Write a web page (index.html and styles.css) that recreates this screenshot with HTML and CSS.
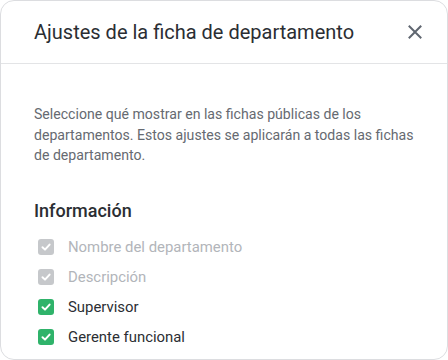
FILE: index.html
```html
<!DOCTYPE html>
<html lang="es">
<head>
<meta charset="utf-8">
<link rel="stylesheet" href="styles.css">
</head>
<body>
<div class="card">
  <div class="header">
    <h1 class="title">Ajustes de la ficha de departamento</h1>
    <button class="close" aria-label="Cerrar">
      <svg width="14" height="14" viewBox="0 0 14 14"><path d="M1.5 1.5 L12.5 12.5 M12.5 1.5 L1.5 12.5" stroke="#5f6670" stroke-width="2" stroke-linecap="square" fill="none"/></svg>
    </button>
  </div>
  <div class="body">
    <p class="desc">Seleccione qué mostrar en las fichas públicas de los departamentos. Estos ajustes se aplicarán a todas las fichas de departamento.</p>
    <h2 class="section">Información</h2>
    <ul class="list">
      <li class="item disabled"><span class="box"><svg width="12" height="12" viewBox="0 0 12 12"><path d="M2.5 6.2 L5 8.6 L9.6 3.6" stroke="#fff" stroke-width="2" fill="none" stroke-linecap="round" stroke-linejoin="round"/></svg></span>Nombre del departamento</li>
      <li class="item disabled"><span class="box"><svg width="12" height="12" viewBox="0 0 12 12"><path d="M2.5 6.2 L5 8.6 L9.6 3.6" stroke="#fff" stroke-width="2" fill="none" stroke-linecap="round" stroke-linejoin="round"/></svg></span>Descripción</li>
      <li class="item"><span class="box"><svg width="12" height="12" viewBox="0 0 12 12"><path d="M2.5 6.2 L5 8.6 L9.6 3.6" stroke="#fff" stroke-width="2" fill="none" stroke-linecap="round" stroke-linejoin="round"/></svg></span>Supervisor</li>
      <li class="item"><span class="box"><svg width="12" height="12" viewBox="0 0 12 12"><path d="M2.5 6.2 L5 8.6 L9.6 3.6" stroke="#fff" stroke-width="2" fill="none" stroke-linecap="round" stroke-linejoin="round"/></svg></span>Gerente funcional</li>
    </ul>
  </div>
</div>
</body>
</html>
```
FILE: styles.css
```css
html, body {
  margin: 0;
  padding: 0;
  background: #ffffff;
}
body {
  font-family: Roboto, "Noto Sans", sans-serif;
  width: 448px;
  height: 360px;
  overflow: hidden;
}
.card {
  box-sizing: border-box;
  width: 448px;
  height: 360px;
  border: 1px solid #dcdde0;
  border-radius: 14px;
  background: #fff;
  overflow: hidden;
}
.header {
  display: flex;
  align-items: center;
  justify-content: space-between;
  height: 62px;
  padding: 0 22px 0 33px;
  border-bottom: 1px solid #e3e4e6;
}
.title {
  margin: 0;
  font-size: 20px;
  font-weight: 400;
  color: #2b2e33;
}
.close {
  border: 0;
  background: none;
  padding: 0;
  width: 20px;
  height: 20px;
  display: flex;
  align-items: center;
  justify-content: center;
}
.body {
  padding: 40px 33px 0 33px;
}
.desc {
  margin: 0;
  font-size: 14.1px;
  line-height: 20.5px;
  color: #666a71;
}
.section {
  margin: 33px 0 0 0;
  font-size: 18px;
  line-height: 24px;
  font-weight: 500;
  color: #2b2e33;
}
.list {
  list-style: none;
  margin: 9px 0 0 0;
  padding: 0;
}
.item {
  display: flex;
  align-items: center;
  height: 30px;
  font-size: 14.9px;
  color: #2b2e33;
}
.box {
  box-sizing: border-box;
  width: 16px;
  height: 16px;
  margin: 0 14px 0 4px;
  border-radius: 3px;
  background: #2fb36a;
  display: flex;
  align-items: center;
  justify-content: center;
}
.disabled {
  color: #b2b5ba;
}
.disabled .box {
  background: #c6c8cb;
}
```
